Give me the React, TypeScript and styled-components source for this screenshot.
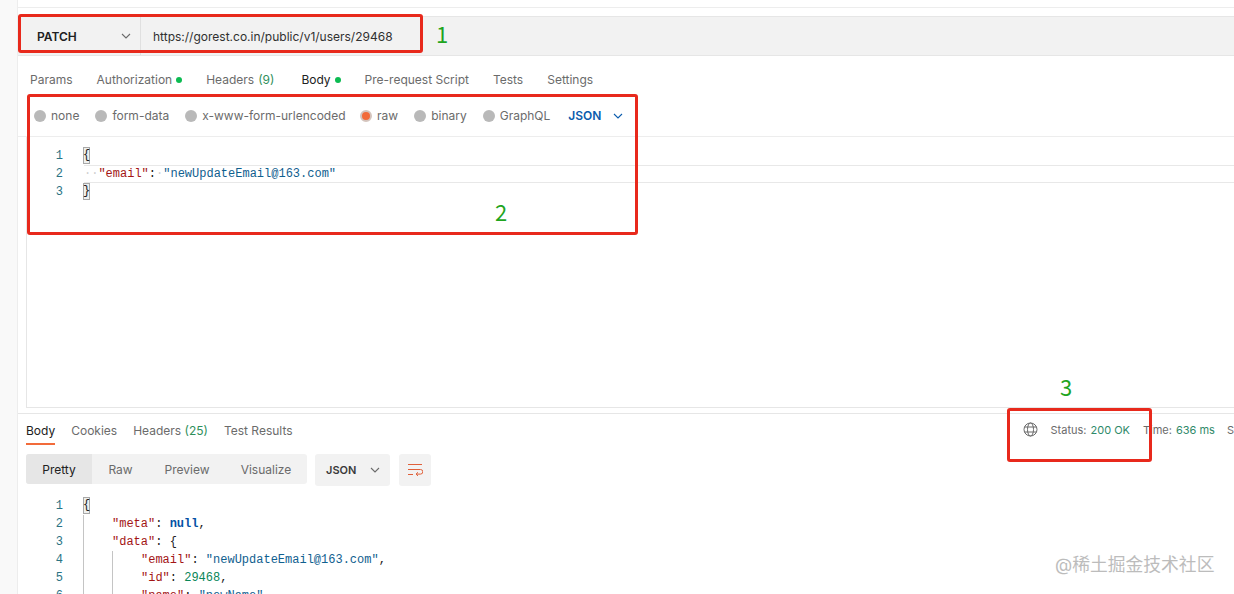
import React from 'react';
import styled, { createGlobalStyle } from 'styled-components';

const GlobalStyle = createGlobalStyle`
  html, body {
    margin: 0;
    padding: 0;
    height: 100%;
    overflow: hidden;
    background: #fff;
    font-family: Inter, "Liberation Sans", sans-serif;
  }
`;

const Page = styled.div`
  position: relative;
  display: flex;
  width: 1234px;
  height: 594px;
  overflow: hidden;
`;

const Sidebar = styled.div`
  width: 17px;
  flex: none;
  background: #f9f9f9;
  border-right: 1px solid #ededed;
`;

const Main = styled.div`
  flex: 1;
  min-width: 0;
  display: flex;
  flex-direction: column;
`;

const TopStrip = styled.div`
  height: 7px;
  margin-bottom: 8px;
  border-bottom: 1px solid #ededed;
`;

const UrlBar = styled.div`
  display: flex;
  padding-left: 8px;
  background: #f2f2f2;
  border-top: 1px solid #e6e6e6;
  border-bottom: 1px solid #e6e6e6;
  box-sizing: border-box;
  height: 40px;
`;

const MethodSelect = styled.div`
  width: 115px;
  display: flex;
  align-items: center;
  justify-content: space-between;
  padding: 0 9px 0 11px;
  box-sizing: border-box;
  border-right: 1px solid #e0e0e0;
  font-size: 12px;
  font-weight: 600;
  color: #212121;
`;

const UrlText = styled.div`
  display: flex;
  align-items: center;
  padding-left: 12px;
  font-size: 12px;
  color: #303030;
`;

const Tabs = styled.div<{ $gap: number }>`
  display: flex;
  align-items: center;
  gap: ${(p) => p.$gap}px;
  font-size: 12px;
  color: #6b6b6b;
`;

const RequestTabs = styled(Tabs)`
  height: 46px;
  padding: 1px 0 0 12px;
  box-sizing: border-box;
`;

const Tab = styled.span<{ $active?: boolean; $mr?: number }>`
  display: inline-flex;
  align-items: center;
  gap: 4px;
  margin-right: ${(p) => p.$mr || 0}px;
  color: ${(p) => (p.$active ? '#212121' : '#6b6b6b')};
  white-space: nowrap;
`;

const Dot = styled.span`
  width: 6px;
  height: 6px;
  border-radius: 50%;
  background: #0cbb52;
`;

const Count = styled.span`
  color: #2f8f5b;
`;

const BodyOptions = styled.div`
  height: 35px;
  display: flex;
  align-items: center;
  padding: 0 0 7px 16px;
  box-sizing: border-box;
  border-bottom: 1px solid #ededed;
  font-size: 12px;
  color: #6b6b6b;
`;

const Radio = styled.label<{ $mr: number }>`
  display: inline-flex;
  align-items: center;
  gap: 5px;
  margin-right: ${(p) => p.$mr}px;
  white-space: nowrap;
`;

const RadioMark = styled.span<{ $on?: boolean }>`
  width: 12px;
  height: 12px;
  border-radius: 50%;
  background: ${(p) => (p.$on ? '#f26b3a' : '#b9b9b9')};
  box-sizing: border-box;
  border: ${(p) => (p.$on ? '2px solid #d4c4bd' : 'none')};
`;

const BodyType = styled.span`
  display: inline-flex;
  align-items: center;
  gap: 12px;
  color: #0b5cad;
  font-weight: 600;
`;

const EditorPane = styled.div`
  height: 271px;
  margin-left: 8px;
  padding-top: 10px;
  box-sizing: border-box;
  border-left: 1px solid #e6e6e6;
  border-bottom: 1px solid #e6e6e6;
`;

const CodeLine = styled.div`
  display: flex;
  height: 18px;
  line-height: 18px;
  font-family: "Liberation Mono", monospace;
  font-size: 12px;
  color: #212121;
  white-space: pre;
`;

const LineNo = styled.span<{ $w: number }>`
  width: ${(p) => p.$w}px;
  flex: none;
  padding-right: 21px;
  box-sizing: border-box;
  text-align: right;
  color: #2a7384;
`;

const CodeText = styled.span<{ $highlight?: boolean }>`
  flex: 1;
  display: flex;
  ${(p) => p.$highlight && 'box-shadow: inset 0 1px 0 #e8e8e8, inset 0 -1px 0 #e8e8e8;'}
`;

const Indent = styled.span<{ $w: number }>`
  position: relative;
  display: inline-block;
  width: ${(p) => p.$w}px;
  flex: none;
`;

const Guide = styled.span<{ $x: number }>`
  position: absolute;
  top: 0;
  bottom: 0;
  left: ${(p) => p.$x}px;
  width: 1px;
  background: #c4c4c4;
`;

const Brace = styled.span`
  display: inline-block;
  height: 17px;
  margin-left: -1px;
  line-height: 16px;
  background: #eef0ee;
  box-shadow: inset 0 0 0 1px #a8a8a8;
`;

const Key = styled.span`
  color: #a31515;
`;

const Str = styled.span`
  color: #10608f;
`;

const Num = styled.span`
  color: #098658;
`;

const Null = styled.span`
  color: #0451a5;
  font-weight: 700;
`;

const WhiteDot = styled.span`
  color: #cfcfcf;
`;

const ResponsePane = styled.div`
  margin-top: 5px;
  border-top: 1px solid #e6e6e6;
  flex: 1;
  min-height: 0;
`;

const ResponseHead = styled.div`
  height: 31px;
  display: flex;
  justify-content: space-between;
  padding-left: 8px;
`;

const ResponseTabs = styled(Tabs)`
  align-items: flex-start;
  padding-top: 9px;
`;

const ResponseTab = styled.span<{ $active?: boolean }>`
  height: 22px;
  box-sizing: border-box;
  line-height: 15px;
  color: ${(p) => (p.$active ? '#212121' : '#6b6b6b')};
  border-bottom: ${(p) => (p.$active ? '2px solid #f26b3a' : 'none')};
`;

const StatusBar = styled.div`
  display: flex;
  align-items: center;
  height: 31px;
  font-size: 11px;
  color: #6b6b6b;
  white-space: nowrap;
`;

const StatusItem = styled.span<{ $ml: number }>`
  margin-left: ${(p) => p.$ml}px;
`;

const Good = styled.span`
  color: #2f8a6a;
  margin-left: 4px;
`;

const Toolbar = styled.div`
  display: flex;
  align-items: flex-start;
  gap: 9px;
  height: 43px;
  margin-top: 9px;
  padding-left: 8px;
`;

const Segments = styled.div`
  display: flex;
  height: 30px;
  border-radius: 3px;
  background: #f2f2f2;
  font-size: 12px;
  color: #6b6b6b;
`;

const Segment = styled.span<{ $active?: boolean; $w: number }>`
  width: ${(p) => p.$w}px;
  display: flex;
  align-items: center;
  justify-content: center;
  border-radius: 3px 0 0 3px;
  background: ${(p) => (p.$active ? '#e6e6e6' : 'transparent')};
  color: ${(p) => (p.$active ? '#212121' : '#6b6b6b')};
`;

const FormatSelect = styled.div`
  width: 75px;
  height: 32px;
  margin-left: -1px;
  display: flex;
  align-items: center;
  justify-content: space-between;
  padding: 0 10px 0 11px;
  box-sizing: border-box;
  border-radius: 3px;
  background: #f2f2f2;
  font-size: 11px;
  font-weight: 600;
  color: #3a3a3a;
`;

const WrapButton = styled.div`
  width: 32px;
  height: 32px;
  display: flex;
  align-items: center;
  justify-content: center;
  border-radius: 3px;
  background: #f2f2f2;
`;

const Annotation = styled.div`
  position: absolute;
  box-sizing: border-box;
  border: 3px solid #e8291c;
  border-radius: 3px;
  pointer-events: none;
`;

const UrlNote = styled(Annotation)`
  left: 18px;
  top: 14px;
  width: 405px;
  height: 39px;
`;

const BodyNote = styled(Annotation)`
  left: 27px;
  top: 94px;
  width: 611px;
  height: 141px;
`;

const StatusNote = styled(Annotation)`
  left: 1007px;
  top: 408px;
  width: 145px;
  height: 54px;
`;

const NoteNumber = styled.span<{ $x: number; $y: number }>`
  position: absolute;
  left: ${(p) => p.$x}px;
  top: ${(p) => p.$y}px;
  font-family: "Noto Sans CJK SC", sans-serif;
  font-size: 22px;
  line-height: 24px;
  color: #1fa51f;
`;

const Watermark = styled.span`
  position: absolute;
  left: 1055px;
  top: 553px;
  font-family: Inter, "Noto Sans CJK SC", sans-serif;
  font-size: 17.8px;
  line-height: 24px;
  color: #bcbcbc;
  white-space: nowrap;
`;

const Chevron = ({ color = '#6b6b6b' }: { color?: string }): React.ReactElement => (
  <svg width='10' height='10' viewBox='0 0 10 10' fill='none'>
    <path d='M1 3l4 4 4-4' stroke={color} strokeWidth='1.1' />
  </svg>
);

const Globe = (): React.ReactElement => (
  <svg width='15' height='15' viewBox='0 0 15 15' fill='none' stroke='#6b6b6b' strokeWidth='1'>
    <circle cx='7.5' cy='7.5' r='6.5' />
    <ellipse cx='7.5' cy='7.5' rx='3' ry='6.5' />
    <path d='M1.5 5h12M1.5 10h12' />
  </svg>
);

const WrapIcon = (): React.ReactElement => (
  <svg width='16' height='14' viewBox='0 0 16 14' fill='none' stroke='#e0603a' strokeWidth='1'>
    <path d='M1 1.5h14M1 6.5h12.5a2 2 0 0 1 0 4.6H9.5M11 9.3l-2 1.8 2 1.8M1 11.5h5' />
  </svg>
);

const requestTabs = ['Params', 'Authorization', 'Headers', 'Body', 'Pre-request Script', 'Tests', 'Settings'];

const bodyOptions = [
  { label: 'none', mr: 16 },
  { label: 'form-data', mr: 16 },
  { label: 'x-www-form-urlencoded', mr: 14.5 },
  { label: 'raw', on: true, mr: 16 },
  { label: 'binary', mr: 16 },
  { label: 'GraphQL', mr: 18 }
];

function renderRequestTab (name: string): React.ReactNode {
  switch (name) {
    case 'Authorization':
      return <Tab key={name}>{name}<Dot /></Tab>;
    case 'Headers':
      return <Tab key={name} $mr={3}>{name}<Count>(9)</Count></Tab>;
    case 'Body':
      return <Tab key={name} $active>{name}<Dot /></Tab>;
    default:
      return <Tab key={name}>{name}</Tab>;
  }
}

export default function App (): React.ReactElement {
  return (
    <Page>
      <GlobalStyle />
      <Sidebar />
      <Main>
        <TopStrip />
        <UrlBar>
          <MethodSelect>PATCH<Chevron /></MethodSelect>
          <UrlText>https://gorest.co.in/public/v1/users/29468</UrlText>
        </UrlBar>
        <RequestTabs $gap={24}>
          {requestTabs.map(renderRequestTab)}
        </RequestTabs>
        <BodyOptions>
          {bodyOptions.map(({ label, on, mr }) => (
            <Radio key={label} $mr={mr}><RadioMark $on={on} />{label}</Radio>
          ))}
          <BodyType>JSON<Chevron color='#0b5cad' /></BodyType>
        </BodyOptions>
        <EditorPane>
          <CodeLine>
            <LineNo $w={57}>1</LineNo>
            <CodeText><Brace>{'{'}</Brace></CodeText>
          </CodeLine>
          <CodeLine>
            <LineNo $w={57}>2</LineNo>
            <CodeText $highlight>
              <WhiteDot>··</WhiteDot><Key>"email"</Key>:<WhiteDot>·</WhiteDot><Str>"newUpdateEmail@163.com"</Str>
            </CodeText>
          </CodeLine>
          <CodeLine>
            <LineNo $w={57}>3</LineNo>
            <CodeText><Brace>{'}'}</Brace></CodeText>
          </CodeLine>
        </EditorPane>
        <ResponsePane>
          <ResponseHead>
            <ResponseTabs $gap={16}>
              <ResponseTab $active>Body</ResponseTab>
              <ResponseTab>Cookies</ResponseTab>
              <ResponseTab>Headers <Count>(25)</Count></ResponseTab>
              <ResponseTab>Test Results</ResponseTab>
            </ResponseTabs>
            <StatusBar>
              <Globe />
              <StatusItem $ml={13}>Status:<Good>200 OK</Good></StatusItem>
              <StatusItem $ml={13}>Time:<Good>636 ms</Good></StatusItem>
              <StatusItem $ml={12}>S</StatusItem>
            </StatusBar>
          </ResponseHead>
          <Toolbar>
            <Segments>
              <Segment $active $w={66}>Pretty</Segment>
              <Segment $w={57}>Raw</Segment>
              <Segment $w={76}>Preview</Segment>
              <Segment $w={82}>Visualize</Segment>
            </Segments>
            <FormatSelect>JSON<Chevron /></FormatSelect>
            <WrapButton><WrapIcon /></WrapButton>
          </Toolbar>
          <CodeLine>
            <LineNo $w={66}>1</LineNo>
            <CodeText><Brace>{'{'}</Brace></CodeText>
          </CodeLine>
          <CodeLine>
            <LineNo $w={66}>2</LineNo>
            <Indent $w={28}><Guide $x={-1} /></Indent><Key>"meta"</Key>: <Null>null</Null>,
          </CodeLine>
          <CodeLine>
            <LineNo $w={66}>3</LineNo>
            <Indent $w={28}><Guide $x={-1} /></Indent><Key>"data"</Key>: {'{'}
          </CodeLine>
          <CodeLine>
            <LineNo $w={66}>4</LineNo>
            <Indent $w={57}><Guide $x={-1} /><Guide $x={28} /></Indent><Key>"email"</Key>: <Str>"newUpdateEmail@163.com"</Str>,
          </CodeLine>
          <CodeLine>
            <LineNo $w={66}>5</LineNo>
            <Indent $w={57}><Guide $x={-1} /><Guide $x={28} /></Indent><Key>"id"</Key>: <Num>29468</Num>,
          </CodeLine>
          <CodeLine>
            <LineNo $w={66}>6</LineNo>
            <Indent $w={57}><Guide $x={-1} /><Guide $x={28} /></Indent><Key>"name"</Key>: <Str>"newName"</Str>,
          </CodeLine>
        </ResponsePane>
      </Main>
      <UrlNote />
      <BodyNote />
      <StatusNote />
      <NoteNumber $x={436} $y={21}>1</NoteNumber>
      <NoteNumber $x={495} $y={199}>2</NoteNumber>
      <NoteNumber $x={1060} $y={374}>3</NoteNumber>
      <Watermark>@稀土掘金技术社区</Watermark>
    </Page>
  );
}
